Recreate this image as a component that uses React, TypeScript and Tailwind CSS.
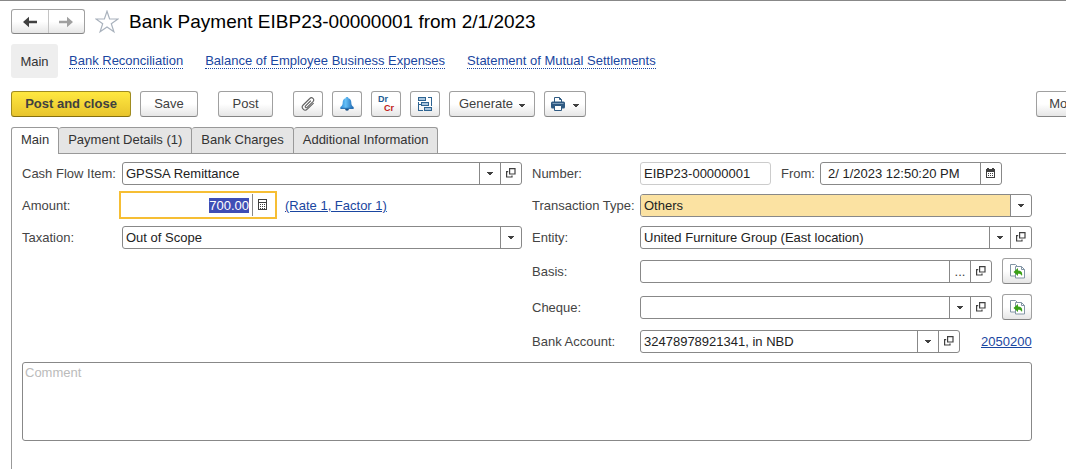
import React, { useEffect, useRef } from 'react';

const btn =
  'flex h-[26px] items-center justify-center rounded-[3px] border border-[#a0a0a0] border-b-[#858585] bg-linear-to-b from-white from-50% to-[#e6e6e6] text-[#404040]';

const links = ['Bank Reconciliation', 'Balance of Employee Business Expenses', 'Statement of Mutual Settlements'];
const tabs = ['Main', 'Payment Details (1)', 'Bank Charges', 'Additional Information'];

const NavArrow: React.FC<{ flip?: boolean }> = ({ flip }) => (
  <svg width="14" height="12" viewBox="0 0 14 12" className={flip ? 'rotate-180' : ''} fill="currentColor">
    <path d="M0 6 6 .8V4.700h8v2.600H6v3.900z" />
  </svg>
);

const Star = () => (
  <svg width="24" height="24" viewBox="0 0 24 24" fill="#fff" stroke="#a9b2bd" strokeWidth="1.200">
    <path d="M12 1.200 14.600 9H23L16.300 13.800 18.900 21.800 12 17 5.100 21.800 7.700 13.800 1 9H9.400z" />
  </svg>
);

const Caret = () => (
  <svg width="6" height="3" viewBox="0 0 6 3" fill="#404040">
    <path d="M0 0h6v1H5v1H4v1H2V2H1V1H0z" />
  </svg>
);

const OpenIcon = () => (
  <svg width="10" height="10" viewBox="0 0 10 10" fill="none" stroke="#404040" strokeWidth="1.200">
    <path d="M3.600.600h5.400v5.400H3.600zM2.200 3.600H.600v5.400H6V7.400" />
  </svg>
);

const CalculatorIcon = () => (
  <svg width="10" height="12" viewBox="0 0 10 12" fill="#404040" shapeRendering="crispEdges">
    <path d="M0 0h9v11H0zM1 1v2h7V1zM1 4v6h7V4z" fillRule="evenodd" />
    <path d="M2 5h1v1H2zM4 5h1v1H4zM6 5h1v1H6zM2 7h1v1H2zM4 7h1v1H4zM6 7h1v1H6zM2 9h1v1H2zM4 9h1v1H4zM6 9h1v1H6z" />
  </svg>
);

const CalendarIcon = () => (
  <svg width="10" height="11" viewBox="0 0 10 11" fill="#404040" shapeRendering="crispEdges">
    <path d="M0 1h1V0h2v1h3V0h2v1h1v9H0zM1 4v5h7V4z" fillRule="evenodd" />
    <path d="M2 5h1v1H2zM4 5h1v1H4zM6 5h1v1H6zM2 7h1v1H2zM4 7h1v1H4zM6 7h1v1H6z" />
  </svg>
);

const ClipIcon = () => (
  <svg width="14" height="14" viewBox="0 0 14 14" fill="none" stroke="#606060" strokeWidth="1.100" strokeLinecap="round">
    <path d="M9.500 4 4.600 8.900a1 1 0 0 0 1.500 1.500L12 4.600a2.200 2.200 0 0 0-3.200-3.100L2.200 8a2.900 2.900 0 0 0 4.100 4.200L12.300 6.300" />
  </svg>
);

const BellIcon = () => (
  <svg width="14" height="14" viewBox="0 0 14 14">
    <defs>
      <linearGradient id="bell" x1="0" x2="1">
        <stop offset="0" stopColor="#2a86d4" />
        <stop offset=".4" stopColor="#66c0f7" />
        <stop offset="1" stopColor="#1c66b0" />
      </linearGradient>
    </defs>
    <path d="M5 11.500h4a2 2.200 0 0 1-4 0z" fill="#174f86" />
    <path d="M7 0c.9 0 1.400.5 1.400 1.200C10.400 1.800 11.300 3.300 11.300 5.200c0 2.600.7 3.600 2.300 4.800v1.800H.4V10c1.600-1.200 2.300-2.200 2.300-4.800 0-1.900.9-3.400 2.900-4C5.600.5 6.100 0 7 0z" fill="url(#bell)" />
    <path d="M.6 11.300h12.800" stroke="#1f66a8" />
  </svg>
);

const StructureIcon = () => (
  <svg width="15" height="15" viewBox="0 0 15 15" fill="#a8c5de" stroke="#2d6391" shapeRendering="crispEdges">
    <path d="M.5.5h7v3h-7zM3.500 5.500h7v3h-7zM6.500 10.500h7v3h-7z" />
    <path d="M9.500.5h4V9M.5 5v8.500H5M.5 7.500H3" fill="none" />
  </svg>
);

const PrinterIcon = () => (
  <svg width="14" height="14" viewBox="0 0 14 14">
    <path d="M3.500 5V.5h5l2 2V5" fill="#fff" stroke="#2f5a82" />
    <path d="M8.500.5v2h2" fill="none" stroke="#2f5a82" />
    <rect x="0" y="4.500" width="14" height="7" rx="1.500" fill="#2f5a82" />
    <path d="M1.500 6.500h11" stroke="#7d9dba" />
    <path d="M3.500 8.500h7v5h-7z" fill="#fff" stroke="#2f5a82" />
  </svg>
);

const FillIcon = () => (
  <svg width="15" height="15" viewBox="0 0 15 15">
    <path d="M.5.5h5l2 2v9.500h-7z" fill="#fff" stroke="#8295a5" />
    <path d="M5.500 2.500h6l3 3v8.500h-9z" fill="#fff" stroke="#8295a5" />
    <path d="M11.500 2.500v3h3" fill="none" stroke="#8295a5" />
    <path d="M3.500 8 8 4v2.500c3.200 0 4.800 1.800 4 5.500-.8-1.800-1.800-2.300-4-2.300V12z" fill="#3aa018" />
  </svg>
);

const Cell: React.FC<{ label: string; children: React.ReactNode }> = ({ label, children }) => (
  <button aria-label={label} className="flex w-[21px] shrink-0 items-center justify-center border-l border-[#888]">
    {children}
  </button>
);

const DropCell = () => <Cell label="Show list"><Caret /></Cell>;
const OpenCell = () => <Cell label="Open"><OpenIcon /></Cell>;

interface SelectFieldProps {
  id: string;
  value?: string;
  open?: boolean;
  filled?: boolean;
}

const SelectField: React.FC<SelectFieldProps> = ({ id, value = '', open, filled }) => (
  <div className="flex h-[23px] min-w-0 flex-1 overflow-hidden rounded-[3px] border border-[#888] bg-white">
    <select id={id} defaultValue={value} className={`min-w-0 flex-1 appearance-none pl-[3px] text-[#222] outline-none ${filled ? 'bg-[#fbe2a2]' : ''}`}>
      <option>{value}</option>
    </select>
    <DropCell />
    {open && <OpenCell />}
  </div>
);

const Row: React.FC<{ id: string; label: string; wide?: boolean; tall?: boolean; children: React.ReactNode }> = ({ id, label, wide, tall, children }) => (
  <div className={`flex items-center ${tall ? 'h-[26px]' : 'h-[22px]'}`}>
    <label htmlFor={id} className={`shrink-0 whitespace-nowrap ${wide ? 'w-[108px]' : 'w-[100px]'}`}>{label}</label>
    {children}
  </div>
);

const FillButton = () => (
  <button aria-label="Fill" className={`${btn} ml-2.5 w-[30px] shrink-0`}>
    <FillIcon />
  </button>
);

export default function App() {
  const amount = useRef<HTMLInputElement>(null);

  useEffect(() => {
    amount.current?.focus();
    amount.current?.select();
  }, []);

  return (
    <div className="flex min-h-screen flex-col overflow-hidden border-t border-[#888] bg-white pl-[11px] pt-2 font-['Liberation_Sans',Arial,sans-serif] text-[13px] leading-[15px] text-[#444]">
      <header className="flex h-[25px] items-center">
        <div className="flex h-[25px] w-[74px] rounded-[3px] border border-[#a0a0a0] border-b-[#858585] bg-linear-to-b from-white from-50% to-[#e6e6e6]">
          <button aria-label="Back" className="flex flex-1 items-center justify-center border-r border-[#c4c4c4] text-[#404040]"><NavArrow /></button>
          <button aria-label="Forward" className="flex flex-1 items-center justify-center text-[#a0a0a0]"><NavArrow flip /></button>
        </div>
        <button aria-label="Add to favorites" className="ml-2.5"><Star /></button>
        <h1 className="ml-2.5 whitespace-nowrap text-[19px] leading-6 text-black">Bank Payment EIBP23-00000001 from 2/1/2023</h1>
      </header>

      <nav className="mt-2.5 flex h-[34px] items-center whitespace-nowrap">
        <span className="mr-[11px] flex h-full w-[47px] items-center justify-center rounded-[3px] bg-[#eee] text-[#333]">Main</span>
        <div className="flex gap-[22px]">
          {links.map((link) => (
            <a key={link} href="#" className="border-b border-dotted border-[#1a46a0] leading-[14px] text-[#1a46a0]">{link}</a>
          ))}
        </div>
      </nav>

      <div className="mt-[13px] flex gap-[9px]">
        <button className="h-[26px] w-[120px] rounded-[3px] border border-[#a08c20] border-b-[#857010] bg-linear-to-b from-[#ffe840] to-[#e8c42c] pb-0.5 font-bold text-[#404040]">Post and close</button>
        <button className={`${btn} w-[58px] pb-0.5`}>Save</button>
        <button className={`${btn} mx-[11px] w-[55px] pb-0.5`}>Post</button>
        <button aria-label="Attachments" className={`${btn} w-[30px]`}><ClipIcon /></button>
        <button aria-label="Reminder" className={`${btn} w-[30px]`}><BellIcon /></button>
        <button className={`${btn} w-[30px]`}>
          <span className="flex w-4 flex-col pb-px text-[9px] font-bold leading-[9px]">
            <span className="text-left text-[#1d5a92]">Dr</span>
            <span className="text-right text-[#c01818]">Cr</span>
          </span>
        </button>
        <button aria-label="Related documents" className={`${btn} w-[30px]`}><StructureIcon /></button>
        <button className={`${btn} w-[86px] gap-1.5 pb-0.5`}>
          Generate
          <span className="pt-1"><Caret /></span>
        </button>
        <button aria-label="Print" className={`${btn} w-[42px] gap-2`}>
          <PrinterIcon />
          <span className="pt-0.5"><Caret /></span>
        </button>
        <div className="ml-auto w-[30px] overflow-hidden">
          <button className={`${btn} w-[68px] gap-1.5 pb-0.5`}>
            More
            <span className="pt-1"><Caret /></span>
          </button>
        </div>
      </div>

      <div role="tablist" className="mt-2.5 flex h-[27px] border-b border-[#999]">
        {tabs.map((tab, i) => (
          <button
            key={tab}
            role="tab"
            aria-selected={i === 0}
            className={`whitespace-nowrap rounded-t-[3px] border-t border-r border-[#999] px-[9px] text-[#333]
              ${i === 0 ? '-mb-px border-l bg-white pb-[3px]' : 'bg-[#e5e5e5] pb-0.5'}`}
          >
            {tab}
          </button>
        ))}
      </div>

      <main className="flex-1 border-l border-[#999] pl-2.5 pr-[34px] pt-2">
        <div className="grid grid-cols-2 gap-2.5">
          <div className="flex flex-col gap-2.5">
            <Row id="cashflow" label="Cash Flow Item:"><SelectField id="cashflow" value="GPSSA Remittance" open /></Row>
            <Row id="amount" label="Amount:">
              <div className="flex h-[22px] w-[152px] pr-px outline-2 outline-offset-1 outline-[#f6be34]">
                <input
                  id="amount"
                  ref={amount}
                  defaultValue="700.00"
                  className="min-w-0 flex-1 pr-[3px] text-right text-[#222] caret-transparent outline-none selection:bg-[#3f4db5] selection:text-white"
                />
                <Cell label="Calculator"><CalculatorIcon /></Cell>
              </div>
              <a href="#" className="ml-[11px] whitespace-nowrap text-[#1a46a0] underline">(Rate 1, Factor 1)</a>
            </Row>
            <Row id="taxation" label="Taxation:"><SelectField id="taxation" value="Out of Scope" /></Row>
          </div>

          <div className="flex flex-col gap-2.5">
            <Row id="number" label="Number:" wide>
              <input id="number" readOnly defaultValue="EIBP23-00000001" className="h-[23px] w-[131px] rounded-[3px] border border-[#ccc] pl-[3px] text-[#222]" />
              <label htmlFor="from" className="ml-2.5 w-[39px]">From:</label>
              <div className="flex h-[23px] w-[182px] rounded-[3px] border border-[#888]">
                <input id="from" defaultValue="2/ 1/2023 12:50:20 PM" className="min-w-0 flex-1 pl-[7px] text-[#222]" />
                <Cell label="Choose date"><CalendarIcon /></Cell>
              </div>
            </Row>
            <Row id="type" label="Transaction Type:" wide><SelectField id="type" value="Others" filled /></Row>
            <Row id="entity" label="Entity:" wide><SelectField id="entity" value="United Furniture Group (East location)" open /></Row>
            <Row id="basis" label="Basis:" wide tall>
              <div className="flex h-[23px] min-w-0 flex-1 rounded-[3px] border border-[#888]">
                <input id="basis" className="min-w-0 flex-1 pl-[3px] text-[#222]" />
                <Cell label="Choose">...</Cell>
                <OpenCell />
              </div>
              <FillButton />
            </Row>
            <Row id="cheque" label="Cheque:" wide tall>
              <SelectField id="cheque" open />
              <FillButton />
            </Row>
            <Row id="account" label="Bank Account:" wide>
              <SelectField id="account" value="32478978921341, in NBD" open />
              <a href="#" className="ml-[21px] w-[51px] text-[#1a46a0] underline">2050200</a>
            </Row>
          </div>
        </div>
        <textarea
          aria-label="Comment"
          placeholder="Comment"
          className="mt-2.5 block h-[79px] w-full resize-none rounded-[3px] border border-[#888] px-0.5 pt-0.5 placeholder:text-[#bbb]"
        />
      </main>
    </div>
  );
}
